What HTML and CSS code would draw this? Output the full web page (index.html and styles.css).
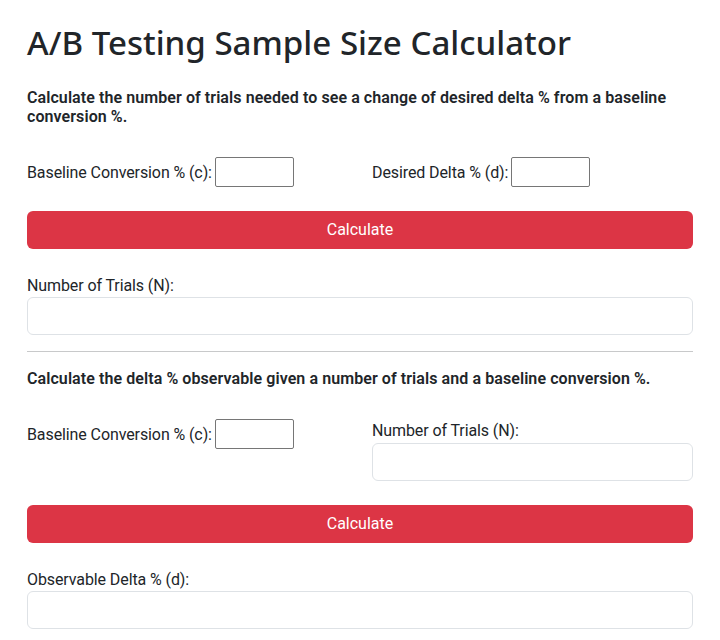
FILE: index.html
```html
<!DOCTYPE html>
<html lang="en">
<head>
<meta charset="utf-8">
<title>A/B Testing Sample Size Calculator</title>
<link rel="stylesheet" href="styles.css">
</head>
<body>
<main class="page">
  <h1 class="title">A/B Testing Sample Size Calculator</h1>

  <section class="calc">
    <p class="intro">Calculate the number of trials needed to see a change of desired delta % from a baseline conversion %.</p>
    <div class="row row-first">
      <div class="col inline-field">
        <label for="c1">Baseline Conversion % (c):</label>
        <input id="c1" class="small-input" type="text">
      </div>
      <div class="col inline-field">
        <label for="d1">Desired Delta % (d):</label>
        <input id="d1" class="small-input" type="text">
      </div>
    </div>
    <button class="btn-calc" type="button">Calculate</button>
    <div class="result">
      <label for="n1">Number of Trials (N):</label>
      <input id="n1" class="form-input" type="text">
    </div>
  </section>

  <hr class="divider">

  <section class="calc">
    <p class="intro">Calculate the delta % observable given a number of trials and a baseline conversion %.</p>
    <div class="row row-second">
      <div class="col inline-field">
        <label for="c2">Baseline Conversion % (c):</label>
        <input id="c2" class="small-input" type="text">
      </div>
      <div class="col stacked-field">
        <label for="n2">Number of Trials (N):</label>
        <input id="n2" class="form-input" type="text">
      </div>
    </div>
    <button class="btn-calc" type="button">Calculate</button>
    <div class="result">
      <label for="d2">Observable Delta % (d):</label>
      <input id="d2" class="form-input" type="text">
    </div>
  </section>
</main>
</body>
</html>
```

FILE: styles.css
```css
* { box-sizing: border-box; }

body {
  margin: 0;
  background: #fff;
  color: #212529;
  font-family: Roboto, "Noto Sans", sans-serif;
  font-size: 16px;
  line-height: 24px;
  letter-spacing: -0.1px;
}

.page {
  padding: 23px 27px 0;
}

.title {
  margin: 0;
  font-family: "Noto Sans", sans-serif;
  font-size: 33.1px;
  line-height: 40px;
  font-weight: 500;
  letter-spacing: 0;
}

.calc:first-of-type .intro {
  margin-top: 25px;
}

.intro {
  margin: 0;
  font-size: 16px;
  line-height: 19.2px;
  font-weight: 600;
  letter-spacing: 0.08px;
}

.row {
  display: grid;
  grid-template-columns: 1fr 1fr;
  column-gap: 24px;
}

.row-first { margin-top: 31px; }
.row-second { margin-top: 30px; }

.inline-field {
  display: flex;
  align-items: flex-start;
  gap: 3px;
}

.inline-field label {
  line-height: 31px;
  height: 30px;
}

.small-input {
  width: 79px;
  height: 30px;
  border: 1px solid #767676;
  border-radius: 2px;
  padding: 1px 2px;
  font: inherit;
  margin: 0;
}

.stacked-field {
  display: flex;
  flex-direction: column;
}

.form-input {
  display: block;
  width: 100%;
  height: 38px;
  border: 1px solid #dee2e6;
  border-radius: 6px;
  padding: 6px 12px;
  font: inherit;
  margin: 0;
}

.btn-calc {
  display: block;
  width: 100%;
  height: 38px;
  margin-top: 24px;
  border: 0;
  border-radius: 6px;
  background: #dc3545;
  color: #fff;
  font: inherit;
  cursor: pointer;
}

.result {
  margin-top: 24px;
}

.result label {
  display: block;
  line-height: 25px;
  height: 24px;
}

.divider {
  margin: 16px 0 17px;
  border: 0;
  border-top: 1px solid #c8c9ca;
}
```
